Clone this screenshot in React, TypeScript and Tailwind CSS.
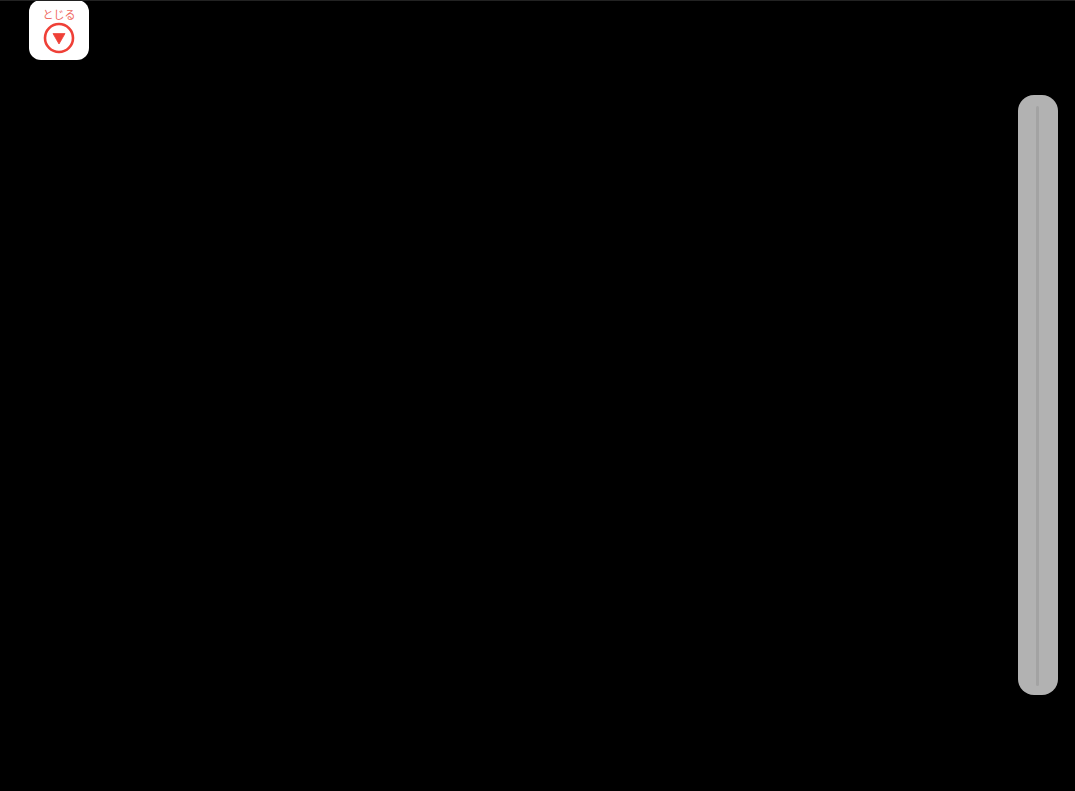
import React from 'react';

function CloseIcon() {
  return (
    <svg width="32" height="32" viewBox="0 0 32 32" fill="none">
      <circle cx="16" cy="16" r="14" stroke="#ef4037" strokeWidth="2.6" />
      <path d="M10 11.6 H22 L16 22 Z" fill="#ef4037" stroke="#ef4037" strokeWidth="0.8" strokeLinejoin="round" />
    </svg>
  );
}

export default function App() {
  return (
    <div className="flex h-screen items-start justify-between overflow-hidden border-t border-[#222] bg-black pl-[29px] pr-[17px] font-['Liberation_Sans','Noto_Sans_CJK_JP',sans-serif]">
      <button className="relative z-10 -mt-px flex h-[60px] w-[60px] flex-col items-center rounded-[12px] bg-white pt-[8px]">
        <span className="text-[11px] leading-[14px] text-[#ef6a62]">とじる</span>
        <span className="block h-8 w-8">
          <CloseIcon />
        </span>
      </button>

      <div className="mt-[94px] flex h-[600px] w-10 justify-center rounded-[16px] bg-[#b2b2b2] pb-[9px] pr-px pt-[11px]">
        <div className="h-full w-[3px] rounded-full bg-[#a3a3a3] blur-[0.5px]" />
      </div>
    </div>
  );
}
